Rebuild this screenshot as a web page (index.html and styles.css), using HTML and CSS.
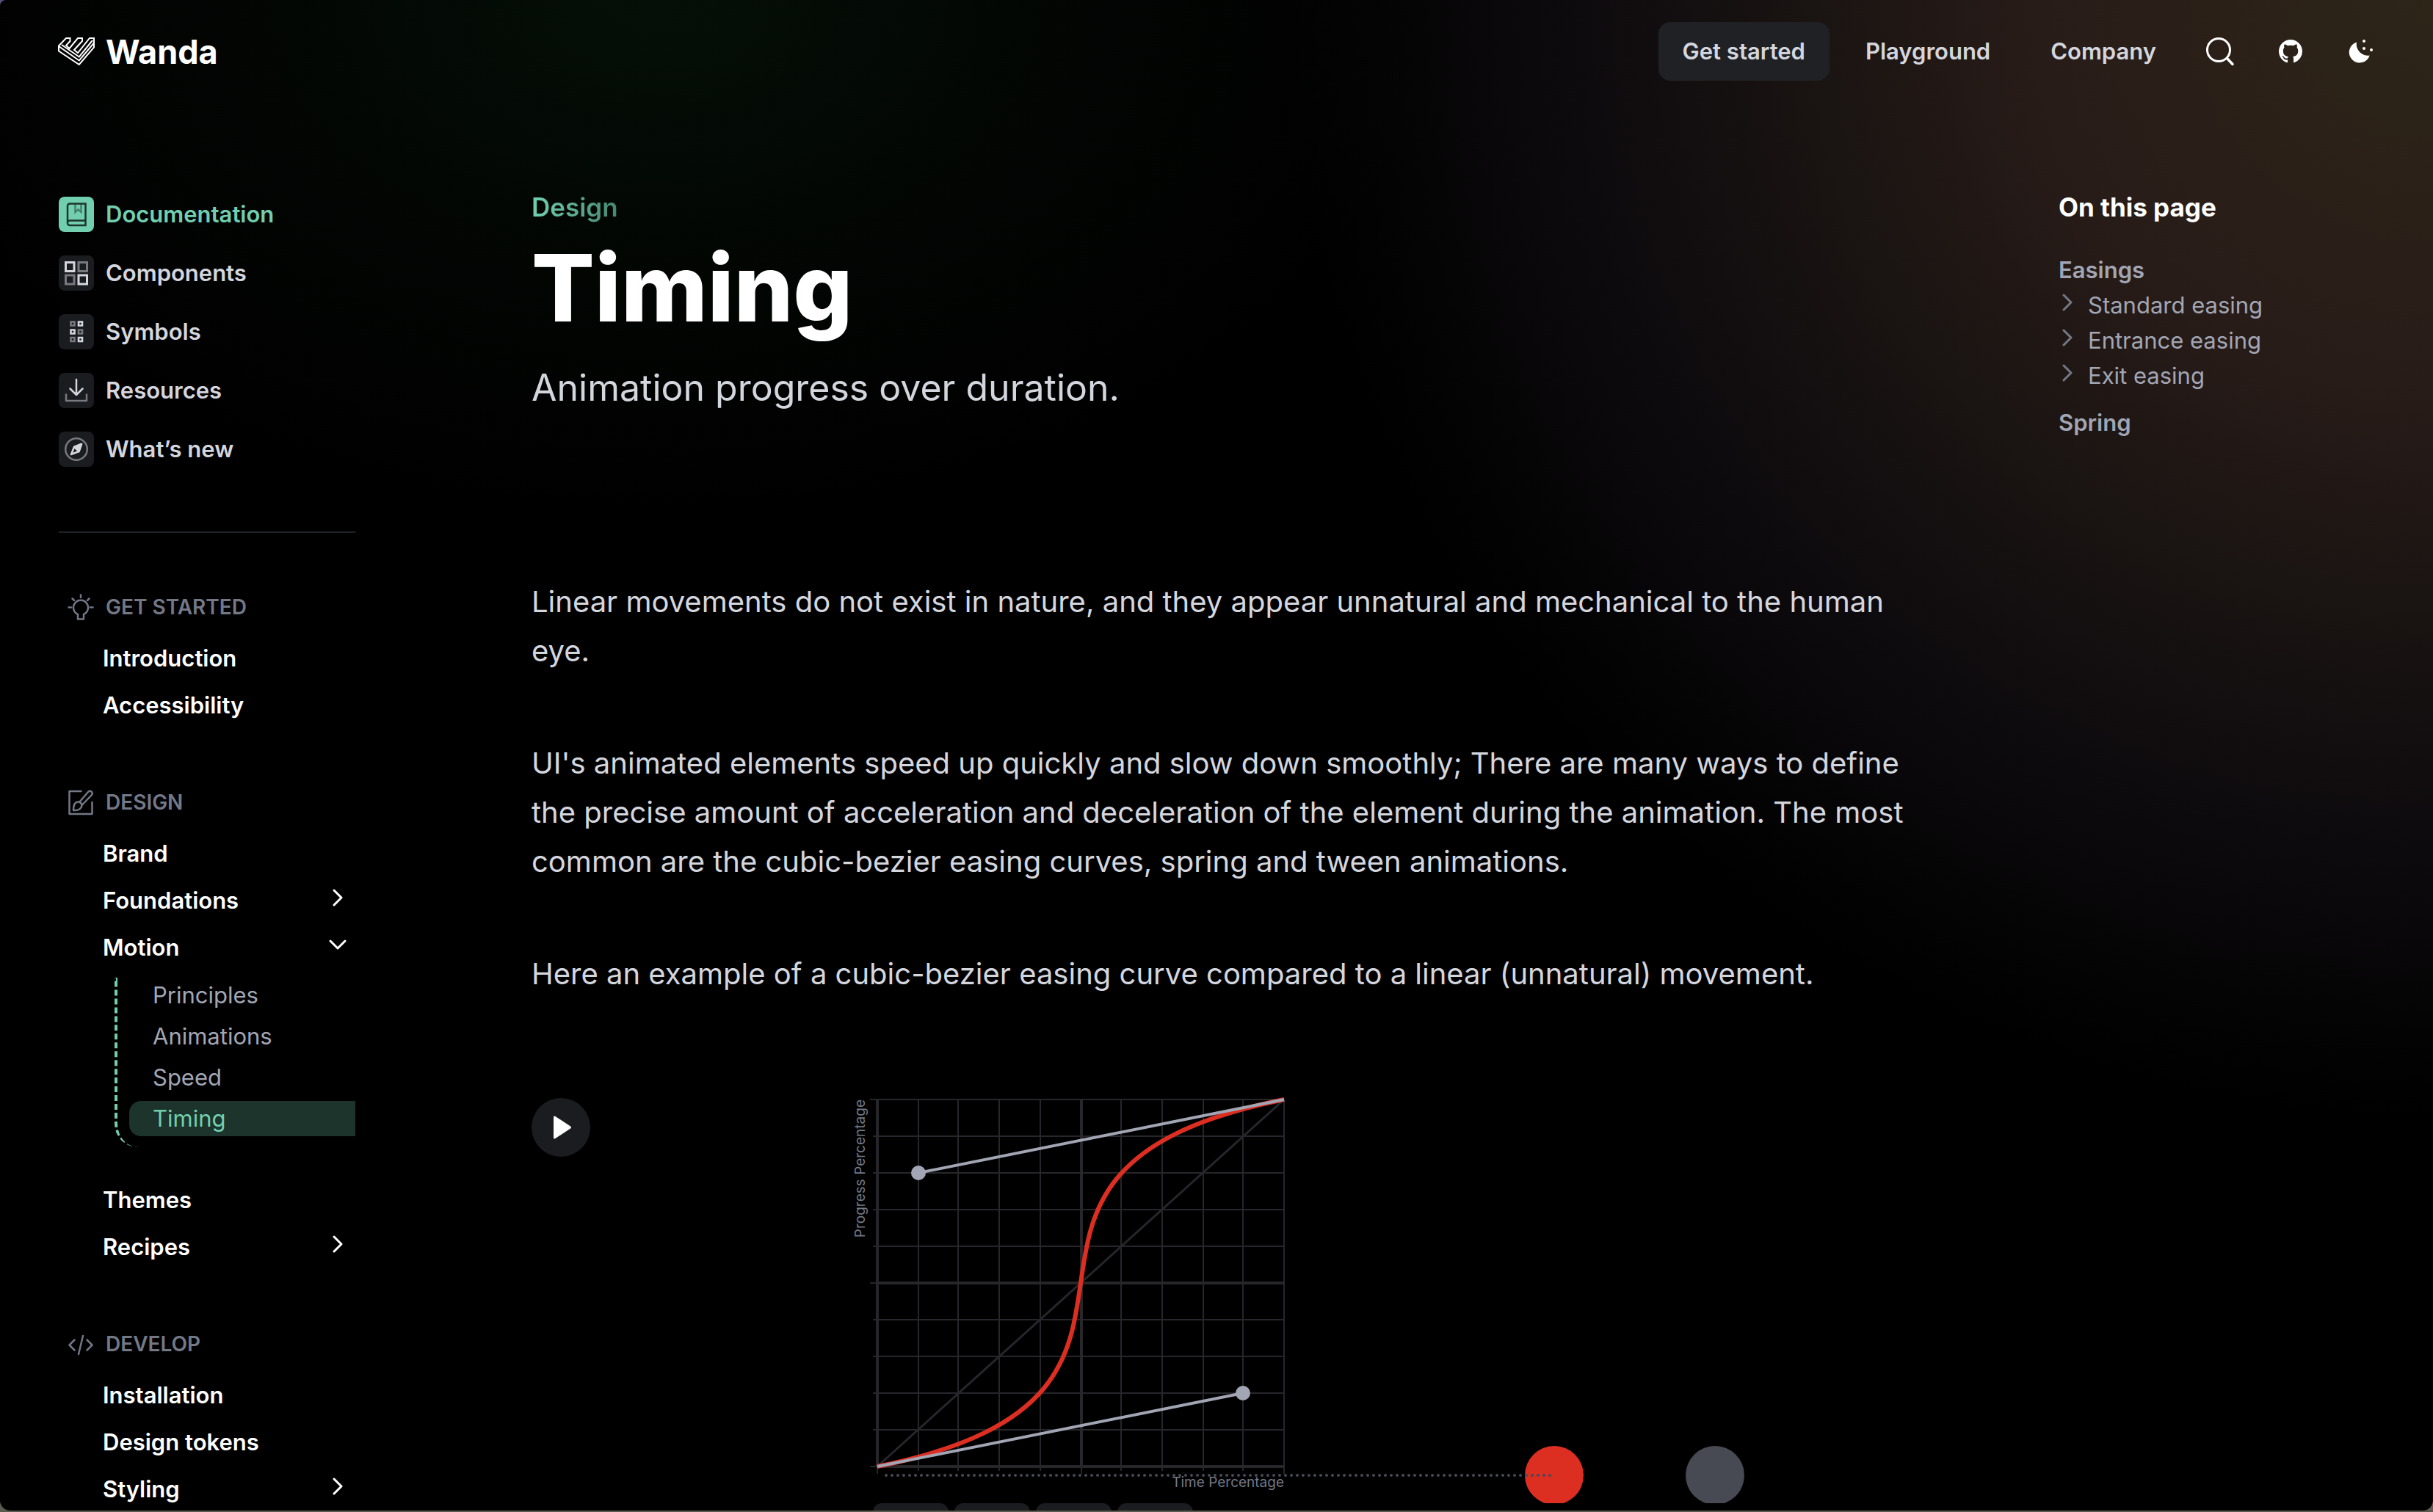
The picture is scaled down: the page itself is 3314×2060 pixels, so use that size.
FILE: index.html
```html
<!DOCTYPE html>
<html lang="en">
<head>
<meta charset="utf-8">
<meta name="viewport" content="width=device-width, initial-scale=1">
<title>Timing – Wanda</title>
<link rel="stylesheet" href="styles.css">
</head>
<body>
<svg class="sprite" aria-hidden="true">
  <symbol id="chevron-right" viewBox="0 0 24 24"><path d="M7 2l10 10L7 22" fill="none" stroke="currentColor" stroke-width="3" stroke-linecap="round" stroke-linejoin="round"/></symbol>
  <symbol id="chevron-down" viewBox="0 0 24 24"><path d="M2 7l10 10L22 7" fill="none" stroke="currentColor" stroke-width="3" stroke-linecap="round" stroke-linejoin="round"/></symbol>
</svg>
<div class="window">
  <header class="header">
    <a class="logo" href="#">
      <svg class="logo-mark" viewBox="0 0 50 38" fill="none" stroke="currentColor" stroke-width="2" aria-hidden="true">
        <path d="M1 11.5L11 1h5.500v4L11 11l4.500 4L27 1h6v4L22 17l5 4L43 1h6v12.500L28.800 37 1 18.500z"/>
        <path d="M1 12l27.800 19.500L49 7.500M5 10l23.800 16.500L47 4"/>
      </svg>
      <span>Wanda</span>
    </a>
    <nav class="header-nav" aria-label="Main">
      <a class="header-link header-link-active" href="#">Get started</a>
      <a class="header-link" href="#">Playground</a>
      <a class="header-link" href="#">Company</a>
    </nav>
    <div class="header-tools">
      <button class="tool" type="button" aria-label="Search">
        <svg viewBox="0 0 48 48" fill="none" stroke="currentColor" stroke-linecap="round"><circle cx="22" cy="22" r="15.500" stroke-width="3"/><path d="M33.500 33.500L41 41.500" stroke-width="3.500"/></svg>
      </button>
      <a class="tool" href="#" aria-label="GitHub">
        <svg viewBox="-4 -4 24 24" fill="currentColor"><path d="M8 0C3.580 0 0 3.580 0 8c0 3.540 2.290 6.530 5.470 7.590.4.070.550-.170.550-.380 0-.190-.010-.820-.010-1.490-2.010.370-2.530-.490-2.690-.940-.090-.230-.480-.940-.820-1.130-.280-.150-.680-.520-.010-.530.630-.010 1.080.580 1.230.820.720 1.210 1.870.870 2.330.660.070-.520.280-.870.510-1.070-1.780-.2-3.640-.890-3.640-3.950 0-.870.310-1.590.820-2.150-.080-.2-.360-1.020.080-2.120 0 0 .670-.210 2.200.820.640-.180 1.320-.270 2-.270.680 0 1.360.090 2 .270 1.530-1.040 2.200-.820 2.200-.820.440 1.100.160 1.920.080 2.120.510.560.820 1.270.820 2.150 0 3.070-1.870 3.750-3.650 3.950.290.250.540.730.540 1.480 0 1.070-.010 1.930-.010 2.200 0 .210.150.460.550.380A8.013 8.013 0 0 0 16 8c0-4.420-3.580-8-8-8z"/></svg>
      </a>
      <button class="tool" type="button" aria-label="Dark theme">
        <svg viewBox="0 0 48 48" fill="currentColor"><path d="M18 11.500A14.300 14.300 0 1 0 35.700 29.500A15.500 15.500 0 0 1 18 11.500z"/><circle cx="28" cy="10" r="2"/><circle cx="28" cy="20" r="2"/><circle cx="38" cy="22" r="2"/></svg>
      </button>
    </div>
  </header>

  <div class="layout">
    <aside class="sidebar">
      <nav class="sections" aria-label="Sections">
        <a class="section section-active" href="#">
          <svg class="section-icon" viewBox="0 0 48 48" fill="none" stroke="currentColor" stroke-width="2.500"><path d="M36.500 9.500H15a3 3 0 0 0-3 3V36a3 3 0 0 0 3 3h21.500zM36 32.500H15a3 3 0 0 0-3 3"/><path d="M22.500 10v11l4-3.500 4 3.500V10" opacity=".5"/></svg>
          Documentation
        </a>
        <a class="section" href="#">
          <svg class="section-icon" viewBox="0 0 48 48" fill="none" stroke="currentColor" stroke-width="3"><path d="M9.500 9.500h11.500v12H9.500zM27 27h11.500v12H27z"/><path d="M27 9.500h11.500v12H27zM9.500 27h11.500v12H9.500z" opacity=".5"/></svg>
          Components
        </a>
        <a class="section" href="#">
          <svg class="section-icon" viewBox="0 0 48 48" fill="none" stroke="currentColor" stroke-width="2.600"><path d="M27 10.500h5v5h-5zM16.500 21.500h5v5h-5zM27 32h5v5h-5z"/><path d="M16.500 10.500h5v5h-5zM27 21.500h5v5h-5zM16.500 32h5v5h-5z" opacity=".5"/></svg>
          Symbols
        </a>
        <a class="section" href="#">
          <svg class="section-icon" viewBox="0 0 48 48" fill="none" stroke="currentColor" stroke-width="2.500" stroke-linecap="round" stroke-linejoin="round"><path d="M24 9v21M15.500 21.500L24 30l8.500-8.500"/><path d="M10 29.500v8.500h28v-8.500" opacity=".5"/></svg>
          Resources
        </a>
        <a class="section" href="#">
          <svg class="section-icon" viewBox="0 0 48 48" fill="none" stroke="currentColor" stroke-width="2.500" stroke-linejoin="round"><circle cx="24" cy="24" r="14.800" opacity=".5"/><path d="M31 17l-3.500 10L17 31l4-10z"/><path d="M31 17l-3.500 10-6.500-6z" fill="currentColor"/></svg>
          What’s new
        </a>
      </nav>
      <hr class="divider">

      <nav class="tree" aria-label="Pages">
        <section class="group">
          <h2 class="group-title">
            <svg viewBox="0 0 36 36" fill="none" stroke="currentColor" stroke-width="2.500" stroke-linecap="round" stroke-linejoin="round"><path d="M14 34.500V28a10 10 0 1 1 8 0v6.500zM18 1.500v3.500M1.500 18.500H5M31 18.500h3.500M6.500 6.500L9 9M29.500 6.500L27 9"/></svg>
            GET STARTED
          </h2>
          <a class="page" href="#">Introduction</a>
          <a class="page" href="#">Accessibility</a>
        </section>
        <section class="group">
          <h2 class="group-title">
            <svg viewBox="0 0 36 36" fill="none" stroke="currentColor" stroke-width="2.500" stroke-linecap="round" stroke-linejoin="round"><path d="M18.500 3H2.500v31h31V18M16 18L28 4a3 3 0 0 1 5 4L20 21.500M8 29q0-11 6-11.500c4-.5 7 4 4.500 7.500Q16 29.500 8 29z"/></svg>
            DESIGN
          </h2>
          <a class="page" href="#">Brand</a>
          <button class="page" type="button" aria-expanded="false">Foundations <svg class="chevron"><use href="#chevron-right"/></svg></button>
          <button class="page" type="button" aria-expanded="true">Motion <svg class="chevron"><use href="#chevron-down"/></svg></button>
          <div class="subpages">
            <a class="subpage" href="#">Principles</a>
            <a class="subpage" href="#">Animations</a>
            <a class="subpage" href="#">Speed</a>
            <a class="subpage subpage-active" href="#" aria-current="page">Timing</a>
          </div>
          <a class="page" href="#">Themes</a>
          <button class="page" type="button" aria-expanded="false">Recipes <svg class="chevron"><use href="#chevron-right"/></svg></button>
        </section>
        <section class="group">
          <h2 class="group-title">
            <svg viewBox="0 0 36 36" fill="none" stroke="currentColor" stroke-width="2.500" stroke-linecap="round" stroke-linejoin="round"><path d="M9.500 12.500L2.500 19.500l7 7M26.500 12.500l7 7-7 7M21 7l-6 25"/></svg>
            DEVELOP
          </h2>
          <a class="page" href="#">Installation</a>
          <a class="page" href="#">Design tokens</a>
          <button class="page" type="button" aria-expanded="false">Styling <svg class="chevron"><use href="#chevron-right"/></svg></button>
        </section>
      </nav>
    </aside>

    <main class="article">
      <p class="eyebrow"><span>Design</span></p>
      <h1 class="title">Timing</h1>
      <p class="subtitle">Animation progress over duration.</p>
      <div class="prose">
        <p>Linear movements do not exist in nature, and they appear unnatural and mechanical to the human eye.</p>
        <p>UI's animated elements speed up quickly and slow down smoothly; There are many ways to define the precise amount of acceleration and deceleration of the element during the animation. The most common are the cubic-bezier easing curves, spring and tween animations.</p>
        <p>Here an example of a cubic-bezier easing curve compared to a linear (unnatural) movement.</p>
      </div>
      <div class="demo">
        <button class="play" type="button" aria-label="Play">
          <svg viewBox="0 0 80 80" fill="currentColor"><path d="M30 26.500v27q0 3 2.500 1.500L53 41.500q2-1.500 0-3L32.500 25q-2.500-1.500-2.500 1.500z"/></svg>
        </button>
        <div class="chart-column">
          <svg class="chart" viewBox="0 0 1216 558" role="img" aria-label="Easing curve">
            <g class="chart-grid">
              <path d="M29 58H589M29 108H589M29 158H589M29 208H589M29 308H589M29 358H589M29 408H589M29 458H589M25 8H589"/>
              <path d="M91 8V514M145 8V514M201 8V514M257 8V514M367 8V514M423 8V514M479 8V514M533 8V514M589 8V518"/>
              <path d="M25 258H35M25 508H35M35 508V518M313 508V518"/>
              <path class="chart-axis" d="M35 7V508M313 8V508M35 258H589M35 508H589"/>
              <path class="chart-diagonal" d="M35 508L589 8"/>
            </g>
            <path class="chart-curve" d="M35 508C533 408 91 108 589 8"/>
            <path class="chart-handle" d="M35 508L533 408M589 8L91 108"/>
            <circle class="chart-knob" cx="533" cy="408" r="10"/>
            <circle class="chart-knob" cx="91" cy="108" r="10"/>
            <text class="chart-label" x="589" y="536" text-anchor="end">Time Percentage</text>
            <text class="chart-label" transform="translate(18 8) rotate(-90)" text-anchor="end">Progress Percentage</text>
            <circle class="ball-curve" cx="957" cy="520" r="40"/>
            <circle class="ball-linear" cx="1176" cy="520" r="40"/>
            <path class="chart-track" d="M47 520H955"/>
          </svg>
          <div class="presets">
            <button class="preset" type="button" aria-label="Standard"></button>
            <button class="preset" type="button" aria-label="Entrance"></button>
            <button class="preset" type="button" aria-label="Exit"></button>
            <button class="preset" type="button" aria-label="Linear"></button>
          </div>
        </div>
      </div>
    </main>

    <aside class="toc">
      <h2 class="toc-title">On this page</h2>
      <a class="toc-link" href="#">Easings</a>
      <div class="toc-sub">
        <a class="toc-sublink" href="#"><svg class="chevron"><use href="#chevron-right"/></svg>Standard easing</a>
        <a class="toc-sublink" href="#"><svg class="chevron"><use href="#chevron-right"/></svg>Entrance easing</a>
        <a class="toc-sublink" href="#"><svg class="chevron"><use href="#chevron-right"/></svg>Exit easing</a>
      </div>
      <a class="toc-link" href="#">Spring</a>
    </aside>
  </div>
</div>
</body>
</html>
```
FILE: styles.css
```css
:root {
  --accent: #71cfb0;
  --accent-soft: #1c342b;
  --text-high: #ffffff;
  --text: #d4d6de;
  --text-mid: #a2a6b4;
  --text-low: #737887;
  --surface: #1b1c20;
  --line: #26262b;
}

* { box-sizing: border-box; }

body {
  min-height: 100vh;
  margin: 0;
  background: linear-gradient(#5d5280 0%, #5b5b50 100%);
  color: var(--text);
  font-family: Inter, "Liberation Sans", sans-serif;
  font-size: 31px;
  -webkit-font-smoothing: antialiased;
}

h1, h2, p { margin: 0; }
a { color: inherit; text-decoration: none; }
button { margin: 0; padding: 0; border: 0; background: none; color: inherit; font: inherit; text-align: left; cursor: pointer; }
svg { display: block; flex: none; }
.sprite { display: none; }

.window {
  height: calc(100vh - 2px);
  overflow: hidden;
  border-radius: 8px 0 14px 14px;
  background-color: #000;
  background-image:
    radial-gradient(ellipse 32% 34% at 27% 0%, #050f07 0%, rgba(4, 10, 5, 0.6) 50%, transparent 100%),
    radial-gradient(ellipse 47% 74% at 100% 0%, #2d2518 0%, #281c18 34%, #1a1412 54%, #0e0b0e 74%, transparent 100%);
}

/* Header */
.header {
  display: flex;
  align-items: center;
  height: 140px;
  padding: 0 74px 0 79px;
}
.logo {
  display: flex;
  align-items: center;
  gap: 15px;
  margin-right: auto;
  color: var(--text-high);
  font-size: 45px;
  font-weight: 700;
}
.logo-mark { width: 50px; height: 38px; }
.header-nav { display: flex; gap: 16px; margin-right: 30px; font-weight: 600; }
.header-link { padding: 0 33px; border-radius: 16px; line-height: 80px; }
.header-link-active { background: #202125; }
.header-tools { display: flex; gap: 48px; color: var(--text-high); }
.tool, .tool svg { width: 48px; height: 48px; }

/* Page columns */
.layout {
  display: grid;
  grid-template-columns: 444px minmax(0, 1fr) 430px;
  column-gap: 200px;
  padding: 120px 80px 0;
}

/* Sidebar */
.sidebar { width: 404px; padding-top: 8px; }
.sections { display: flex; flex-direction: column; gap: 32px; font-weight: 600; }
.section { display: flex; align-items: center; gap: 16px; line-height: 48px; }
.section-icon { width: 48px; height: 48px; border-radius: 8px; background: var(--surface); }
.section-active { color: var(--accent); }
.section-active .section-icon { background: var(--accent); color: var(--accent-soft); }
.divider { height: 2px; margin: 88px 0 83px; border: 0; background: #202126; }

.tree { display: flex; flex-direction: column; gap: 82px; }
.group-title {
  display: flex;
  align-items: center;
  gap: 16px;
  padding-left: 12px;
  margin-bottom: 20px;
  color: var(--text-low);
  font-size: 28px;
  font-weight: 600;
  line-height: 36px;
}
.group-title svg { width: 36px; height: 36px; }
.page {
  display: flex;
  align-items: center;
  justify-content: space-between;
  width: 100%;
  padding: 0 12px 0 60px;
  color: var(--text-high);
  font-weight: 600;
  line-height: 64px;
}
.chevron { width: 24px; height: 24px; margin-bottom: 8px; }

.subpages {
  display: flex;
  flex-direction: column;
  gap: 8px;
  margin: 9px 0 40px 76px;
  padding: 0 0 15px 16px;
  border-left: 4px dashed var(--accent);
  border-bottom-left-radius: 32px;
  color: var(--text-mid);
}
.subpage { padding-left: 32px; border-radius: 16px 0 0 16px; line-height: 48px; }
.subpage-active { background: var(--accent-soft); color: var(--accent); }

/* Article */
.eyebrow { font-size: 35px; font-weight: 600; line-height: 44px; }
.eyebrow span {
  background: linear-gradient(to right, #72d0b1, #478672);
  background-clip: text;
  -webkit-background-clip: text;
  color: transparent;
}
.title { margin-top: 18px; color: var(--text-high); font-size: 127px; font-weight: 800; line-height: 140px; }
.subtitle { margin-top: 32px; font-size: 50px; line-height: 68px; }
.prose {
  display: flex;
  flex-direction: column;
  gap: 86px;
  margin-top: 224px;
  font-size: 40px;
  line-height: 67px;
}

/* Curve demo */
.demo { display: flex; align-items: flex-start; gap: 356px; margin-top: 130px; }
.play {
  flex: none;
  width: 80px;
  height: 80px;
  margin-top: 6px;
  border-radius: 50%;
  background: var(--surface);
  color: var(--text-high);
}
.chart { width: 1216px; height: 558px; }
.chart-grid { fill: none; stroke: var(--line); stroke-width: 2; }
.chart-axis { stroke-width: 4; }
.chart-diagonal { stroke-width: 3; }
.chart-curve { fill: none; stroke: #dd2e22; stroke-width: 6; }
.chart-handle { fill: none; stroke: var(--text-mid); stroke-width: 4; }
.chart-knob { fill: var(--text-mid); }
.chart-label { fill: var(--text-low); font-size: 19px; }
.chart-track { stroke: #484b55; stroke-width: 4; stroke-linecap: round; stroke-dasharray: 0 8; }
.ball-curve { fill: #dd2e22; }
.ball-linear { fill: #474a53; }
.presets { display: flex; gap: 8px; padding-left: 29px; }
.preset { width: 103px; height: 56px; border-radius: 12px; background: var(--surface); }

/* Table of contents */
.toc-title { margin-bottom: 40px; color: var(--text-high); font-size: 35px; font-weight: 700; line-height: 44px; }
.toc-link { display: block; color: var(--text-mid); font-weight: 600; line-height: 48px; }
.toc-sub { margin-bottom: 16px; }
.toc-sublink { display: flex; align-items: center; gap: 16px; color: var(--text-mid); line-height: 48px; }
.toc-sublink .chevron { color: var(--text-low); }
```
